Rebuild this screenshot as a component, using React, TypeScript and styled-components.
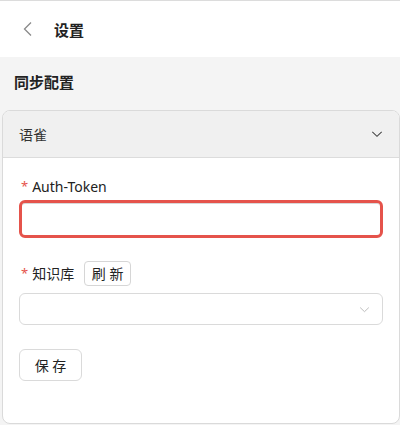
import React from "react";
import styled, { createGlobalStyle } from "styled-components";

const Global = createGlobalStyle`
  html, body { margin: 0; padding: 0; }
  body {
    width: 400px; height: 425px; overflow: hidden;
    background: #f4f4f4;
    font-family: "Noto Sans", "Noto Sans CJK SC", sans-serif;
    color: #222;
  }
  * { box-sizing: border-box; }
`;

const Page = styled.div`
  display: flex;
  flex-direction: column;
  height: 425px;
  border-top: 1px solid #dcdcdc;
`;

const Header = styled.header`
  height: 56px;
  background: #fff;
  display: flex;
  align-items: center;
  padding-left: 22px;
  gap: 20px;
`;

const Back = styled.span`
  display: flex;
  color: #888;
`;

const Title = styled.h1`
  margin: 0;
  font-size: 15px;
  font-weight: 600;
  color: #222;
`;

const Section = styled.section`
  flex: 1;
  display: flex;
  flex-direction: column;
  padding: 14px 0 0 2px;
`;

const SectionTitle = styled.h2`
  margin: 0 0 17px 12px;
  font-size: 15px;
  font-weight: 700;
  color: #222;
  line-height: 22px;
`;

const Card = styled.div`
  border: 1px solid #dadada;
  border-radius: 8px;
  background: #fff;
  overflow: hidden;
  height: 314px;
`;

const CardHead = styled.div`
  height: 47px;
  background: #f0f0f0;
  border-bottom: 1px solid #dcdcdc;
  display: flex;
  align-items: center;
  justify-content: space-between;
  padding: 0 15px 0 16px;
  font-size: 14px;
  color: #333;
`;

const CardBody = styled.div`
  padding: 16px 16px 0 16px;
  display: flex;
  flex-direction: column;
`;

const Field = styled.div<{ $mb: number }>`
  display: flex;
  flex-direction: column;
  margin-bottom: ${(p) => p.$mb}px;
`;

const Label = styled.label<{ $mb: number; $h: number }>`
  display: flex;
  align-items: center;
  font-size: 14px;
  color: #222;
  height: ${(p) => p.$h}px;
  margin-bottom: ${(p) => p.$mb}px;
  padding-left: 2px;
`;

const Star = styled.span`
  color: #e5534b;
  margin-right: 4px;
  font-size: 13px;
`;

const TokenInput = styled.input`
  height: 38px;
  width: 100%;
  border: 3px solid #e5534b;
  border-radius: 6px;
  box-shadow: inset 0 1px 0 #d8d8d8;
  outline: none;
  background: #fff;
`;

const SmallButton = styled.button`
  margin-left: 10px;
  height: 25px;
  width: 47px;
  padding: 0;
  border: 1px solid #d6d6d6;
  border-radius: 4px;
  background: #fff;
  font-family: inherit;
  font-size: 14px;
  color: #222;
`;

const Select = styled.div`
  height: 32px;
  width: 100%;
  border: 1px solid #dadada;
  border-radius: 6px;
  display: flex;
  align-items: center;
  justify-content: flex-end;
  padding-right: 11px;
  color: #b8b8b8;
`;

const SaveButton = styled.button`
  align-self: flex-start;
  width: 63px;
  height: 32px;
  padding: 0;
  border: 1px solid #dadada;
  border-radius: 6px;
  background: #fff;
  font-family: inherit;
  font-size: 14px;
  color: #222;
`;

const Chevron = ({ size, color }: { size: number; color: string }) => (
  <svg width={size} height={size} viewBox="0 0 12 12" fill="none">
    <path d="M2 4.2l4 3.8 4-3.8" stroke={color} strokeWidth="0.9" />
  </svg>
);

export default function App() {
  return (
    <>
      <Global />
      <Page>
        <Header>
          <Back>
            <svg width="12" height="16" viewBox="0 0 12 16" fill="none">
              <path d="M9 1.5L2.5 8 9 14.5" stroke="#8a8a8a" strokeWidth="1.3" />
            </svg>
          </Back>
          <Title>设置</Title>
        </Header>
        <Section>
          <SectionTitle>同步配置</SectionTitle>
          <Card>
            <CardHead>
              <span>语雀</span>
              <Chevron size={14} color="#444" />
            </CardHead>
            <CardBody>
              <Field $mb={22}>
                <Label $mb={2} $h={24}>
                  <Star>*</Star>Auth-Token
                </Label>
                <TokenInput />
              </Field>
              <Field $mb={24}>
                <Label $mb={7} $h={26}>
                  <Star>*</Star>知识库
                  <SmallButton>刷 新</SmallButton>
                </Label>
                <Select>
                  <Chevron size={13} color="#bbb" />
                </Select>
              </Field>
              <SaveButton>保 存</SaveButton>
            </CardBody>
          </Card>
        </Section>
      </Page>
    </>
  );
}
